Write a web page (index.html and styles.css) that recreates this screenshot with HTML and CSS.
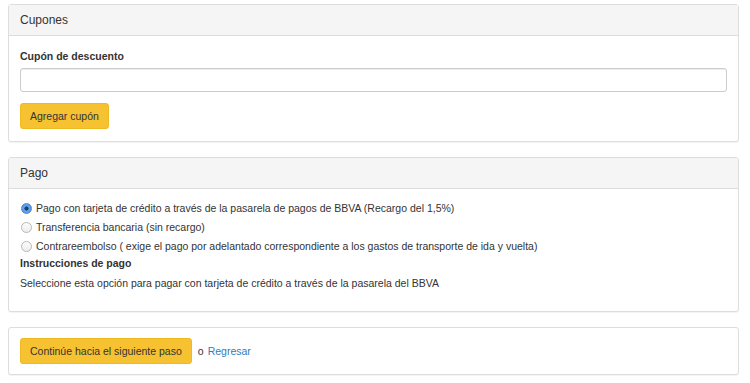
FILE: index.html
```html
<!DOCTYPE html>
<html lang="es">
<head>
    <meta charset="UTF-8">
    <meta name="viewport" content="width=device-width, initial-scale=1.0">
    <title>Checkout - Pago</title>
    <link rel="stylesheet" href="styles.css">
</head>
<body>
    <!-- Cupones -->
    <div class="panel">
        <div class="panel-heading">Cupones</div>
        <div class="panel-body">
            <label class="field-label" for="coupon">Cupón de descuento</label>
            <input class="form-control" type="text" id="coupon">
            <button class="btn">Agregar cupón</button>
        </div>
    </div>

    <!-- Pago -->
    <div class="panel">
        <div class="panel-heading">Pago</div>
        <div class="panel-body payment-body">
            <div class="radio"><span class="radio-dot checked"></span>Pago con tarjeta de crédito a través de la pasarela de pagos de BBVA (Recargo del 1,5%)</div>
            <div class="radio"><span class="radio-dot"></span>Transferencia bancaria (sin recargo)</div>
            <div class="radio"><span class="radio-dot"></span>Contrareembolso ( exige el pago por adelantado correspondiente a los gastos de transporte de ida y vuelta)</div>
            <div class="instructions-title">Instrucciones de pago</div>
            <p class="instructions">Seleccione esta opción para pagar con tarjeta de crédito a través de la pasarela del BBVA</p>
        </div>
    </div>

    <!-- Acciones -->
    <div class="panel">
        <div class="panel-body actions">
            <button class="btn">Continúe hacia el siguiente paso</button>
            <span class="or">o</span>
            <a href="#" class="back-link">Regresar</a>
        </div>
    </div>
</body>
</html>
```

FILE: styles.css
```css
body {
    margin: 4px 11px 0 8px;
    font-family: "Liberation Sans", Arial, sans-serif;
    font-size: 10.5px;
    line-height: 15px;
    color: #333;
    background-color: #fff;
}
.panel {
    border: 1px solid #ddd;
    border-radius: 3px;
    background-color: #fff;
    box-shadow: 0 1px 1px rgba(0, 0, 0, 0.05);
    margin-bottom: 15px;
}
.panel-heading {
    background-color: #f5f5f5;
    border-bottom: 1px solid #ddd;
    padding: 8px 11px 7px;
    font-size: 12px;
    line-height: 15px;
    color: #333;
}
.panel-body {
    padding: 13px 11px 12px;
}
.field-label {
    display: block;
    font-weight: bold;
    margin-bottom: 4px;
}
.form-control {
    display: block;
    box-sizing: border-box;
    width: 100%;
    height: 24px;
    margin: 0 0 11px;
    padding: 4px 9px;
    border: 1px solid #ccc;
    border-radius: 3px;
    box-shadow: inset 0 1px 1px rgba(0, 0, 0, 0.075);
    font-family: inherit;
    font-size: 10.5px;
}
.btn {
    display: inline-block;
    height: 26px;
    padding: 0 9px;
    background-color: #f6c232;
    border: 1px solid #efb920;
    border-radius: 3px;
    color: #333;
    font-family: inherit;
    font-size: 10.5px;
    cursor: pointer;
}
.payment-body {
    padding-top: 10px;
    padding-bottom: 10px;
}
.radio {
    display: flex;
    align-items: center;
    line-height: 19px;
}
.radio-dot {
    box-sizing: border-box;
    width: 11px;
    height: 11px;
    margin: 0 4px 0 1px;
    border: 1px solid #b8b8b8;
    border-radius: 50%;
    background: linear-gradient(#fdfdfd, #ececec);
}
.radio-dot.checked {
    border-color: #4a8ad8;
    background: radial-gradient(circle, #1d3c70 0, #1d3c70 1.8px, #6aa9ef 2.4px, #3f86e0 100%);
}
.instructions-title {
    font-weight: bold;
}
.instructions {
    margin: 5px 0 10px;
}
.actions {
    display: flex;
    align-items: center;
    padding: 10px 11px;
}
.or {
    margin: 0 4px 0 6px;
}
.back-link {
    color: #337ab7;
    text-decoration: none;
}
```
